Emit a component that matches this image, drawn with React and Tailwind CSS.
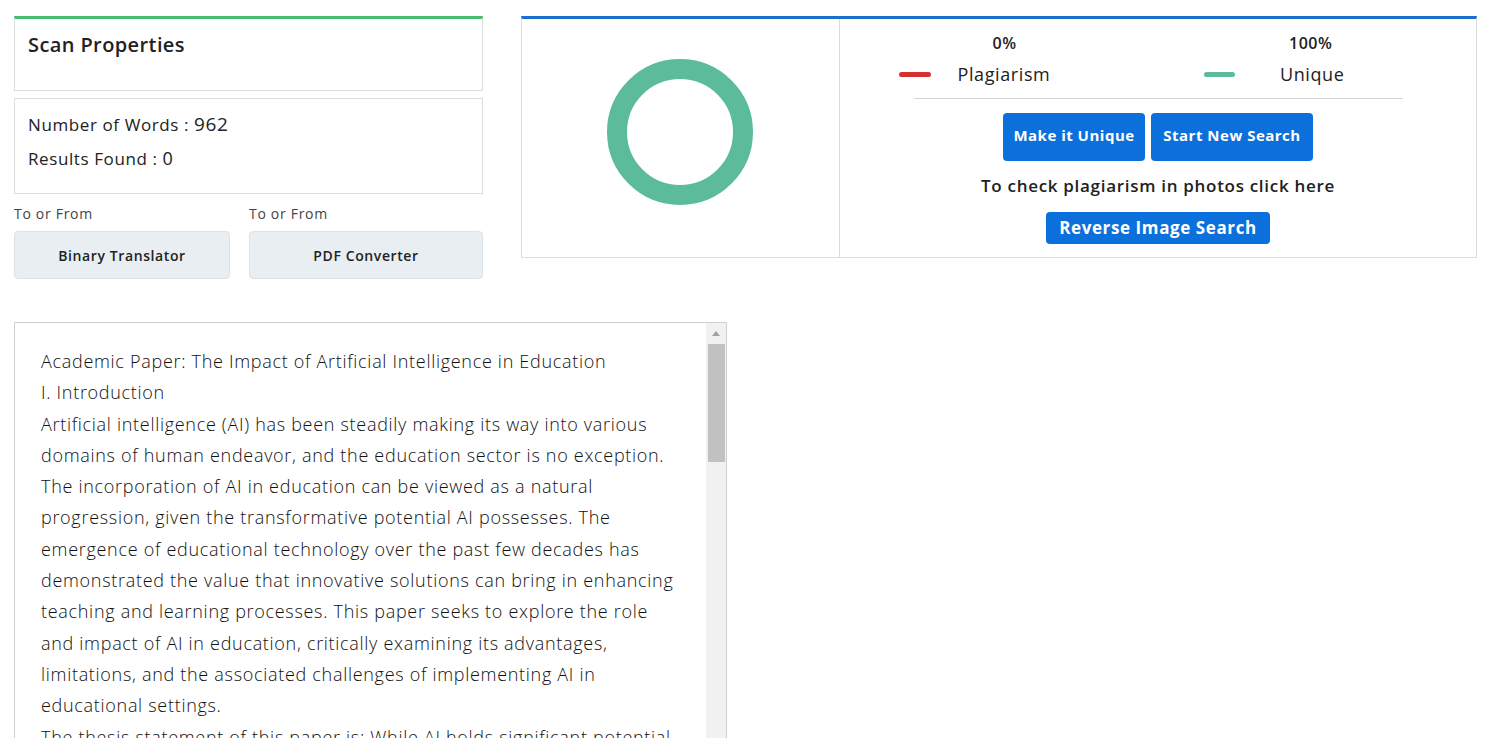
import React from "react";

const LINES = [
  "Academic Paper: The Impact of Artificial Intelligence in Education",
  "I. Introduction",
  "Artificial intelligence (AI) has been steadily making its way into various",
  "domains of human endeavor, and the education sector is no exception.",
  "The incorporation of AI in education can be viewed as a natural",
  "progression, given the transformative potential AI possesses. The",
  "emergence of educational technology over the past few decades has",
  "demonstrated the value that innovative solutions can bring in enhancing",
  "teaching and learning processes. This paper seeks to explore the role",
  "and impact of AI in education, critically examining its advantages,",
  "limitations, and the associated challenges of implementing AI in",
  "educational settings.",
  "The thesis statement of this paper is: While AI holds significant potential",
  "to revolutionize education, its implementation must be carefully managed.",
];

const Donut = () => (
  <svg width="150" height="150" viewBox="0 0 150 150">
    <circle cx="75" cy="75" r="63" fill="none" stroke="#5bbb9b" strokeWidth="20" />
  </svg>
);

const App = () => {
  return (
    <div
      className="h-[738px] overflow-hidden bg-white text-[#212121]"
      style={{ fontFamily: "'Open Sans', 'Liberation Sans', sans-serif" }}
    >
      <div className="flex items-start pt-4 pl-[14px]">
        {/* left column */}
        <div className="w-[469px] flex flex-col">
          <div className="h-[75px] border border-[#dcdcdc] border-t-[3px] border-t-[#48bd6e] px-[13px] pt-[11px]">
            <span className="text-[20px] font-semibold tracking-[0.4px] text-[#222]">Scan Properties</span>
          </div>
          <div className="mt-[7px] h-[96px] border border-[#dcdcdc] px-[13px] pt-[13px] flex flex-col gap-[9px]">
            <span className="text-[17px] tracking-[0.6px] text-[#222] leading-[24px]">
              Number of Words : <span className="text-[19px]">962</span>
            </span>
            <span className="text-[17px] tracking-[0.6px] text-[#222] leading-[24px]">
              Results Found : <span className="text-[18px]">0</span>
            </span>
          </div>
          <div className="mt-[10px] flex gap-[19px]">
            <div className="w-[216px] flex flex-col">
              <span className="text-[14px] tracking-[0.7px] text-[#444] leading-[20px]">To or From</span>
              <button className="mt-[7px] h-[48px] rounded-[4px] bg-[#e9eef3] border border-[#dde2e7] text-[14px] font-semibold tracking-[0.6px] text-[#222]">
                Binary Translator
              </button>
            </div>
            <div className="w-[234px] flex flex-col">
              <span className="text-[14px] tracking-[0.7px] text-[#444] leading-[20px]">To or From</span>
              <button className="mt-[7px] h-[48px] rounded-[4px] bg-[#e9eef3] border border-[#dde2e7] text-[14px] font-semibold tracking-[0.6px] text-[#222]">
                PDF Converter
              </button>
            </div>
          </div>
        </div>

        {/* right card */}
        <div className="ml-[38px] w-[956px] h-[242px] flex border border-[#dcdcdc] border-t-[3px] border-t-[#1a6fd0]">
          <div className="w-[318px] border-r border-[#dcdcdc] flex items-center justify-center">
            <div className="-mt-[13px] -ml-[2px]">
              <Donut />
            </div>
          </div>
          <div className="flex-1 flex flex-col items-center">
            <div className="w-[489px] pt-[12px] flex border-b border-[#d5d5d5] pb-[12px]">
              <div className="flex-1 flex flex-col">
                <span className="pl-[79px] text-[16px] font-semibold tracking-[0.5px] leading-[24px]">0%</span>
                <div className="flex items-center mt-[7px] -ml-[15px]">
                  <span className="w-[32px] h-[5px] rounded-full bg-[#d63031]" />
                  <span className="ml-[27px] text-[18px] font-medium tracking-[0.6px] leading-[24px]">Plagiarism</span>
                </div>
              </div>
              <div className="flex-1 flex flex-col">
                <span className="pl-[131px] text-[16px] font-semibold tracking-[0.5px] leading-[24px]">100%</span>
                <div className="flex items-center mt-[7px] ml-[46px]">
                  <span className="w-[31px] h-[5px] rounded-full bg-[#5bbb9b]" />
                  <span className="ml-[45px] text-[18px] font-medium tracking-[0.6px] leading-[24px]">Unique</span>
                </div>
              </div>
            </div>
            <div className="mt-[14px] flex gap-[6px]">
              <button className="w-[142px] h-[48px] rounded-[4px] bg-[#0b6fdc] text-white text-[15px] font-bold tracking-[0.5px] pb-[4px]">
                Make it Unique
              </button>
              <button className="w-[162px] h-[48px] rounded-[4px] bg-[#0b6fdc] text-white text-[15px] font-bold tracking-[0.5px] pb-[4px]">
                Start New Search
              </button>
            </div>
            <span className="mt-[13px] text-[17px] font-semibold tracking-[0.7px] leading-[24px]">
              To check plagiarism in photos click here
            </span>
            <button className="mt-[14px] w-[224px] h-[32px] rounded-[4px] bg-[#0b6fdc] text-white text-[17px] font-bold tracking-[0.6px]">
              Reverse Image Search
            </button>
          </div>
        </div>
      </div>

      {/* text area */}
      <div className="mt-[43px] ml-[14px] w-[713px] h-[460px] border border-[#d0d0d0] flex">
        <div className="flex-1 pl-[26px] pt-[23px] overflow-hidden">
          {LINES.map((line, i) => (
            <div key={i} className="whitespace-nowrap text-[18px] font-light tracking-[0.7px] leading-[31.3px] text-[#111]">
              {line}
            </div>
          ))}
        </div>
        <div className="w-[20px] bg-[#f1f1f1] flex flex-col items-center">
          <div className="h-[21px] flex items-center justify-center">
            <svg width="8" height="5" viewBox="0 0 8 5">
              <path d="M4 0 L8 5 L0 5 Z" fill="#a3a3a3" />
            </svg>
          </div>
          <div className="w-[17px] h-[118px] bg-[#c1c1c1]" />
        </div>
      </div>
    </div>
  );
};

export default App;
